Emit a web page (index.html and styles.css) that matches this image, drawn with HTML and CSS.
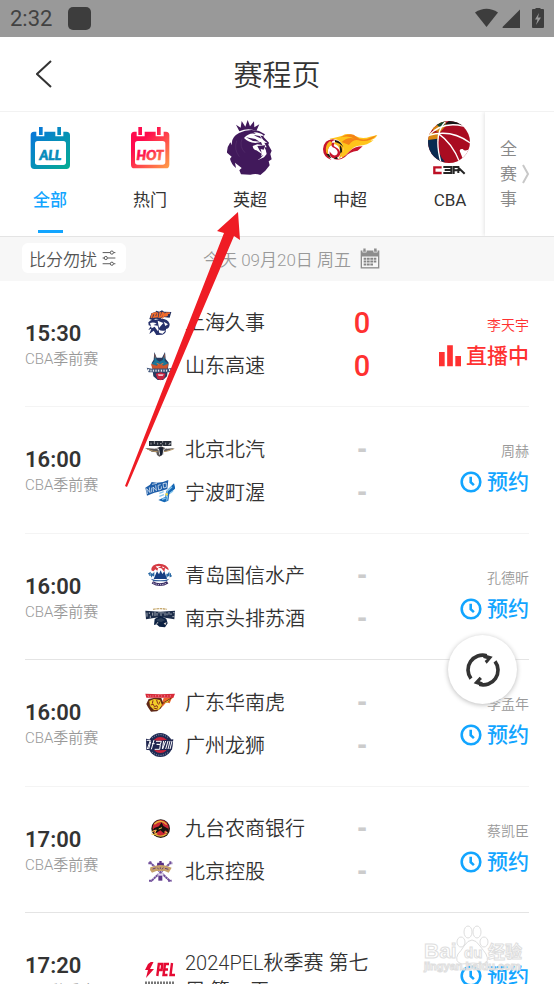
FILE: index.html
```html
<!DOCTYPE html>
<html lang="zh-CN">
<head>
<meta charset="utf-8">
<meta name="viewport" content="width=device-width, initial-scale=1">
<title>赛程页</title>
<link rel="stylesheet" href="styles.css">
</head>
<body>
<svg class="defs" aria-hidden="true">
  <symbol id="clock" viewBox="0 0 22 22"><circle cx="11" cy="11" r="9.3" fill="none" stroke="currentColor" stroke-width="2.6"/><path d="M10.7 5.8v5.4l3.2 2.9" fill="none" stroke="currentColor" stroke-width="2.6"/></symbol>
</svg>

<div class="status">
  <span>2:32</span><i class="status-app"></i>
  <svg class="status-icons" viewBox="0 0 72 24" aria-hidden="true">
    <path d="M1 5.5Q12.500-2 24 5.500L12.500 20Z" fill="#3d3d3d"/>
    <path d="M46 2.500V21H29Q28 20.500 29 19.500Z" fill="#3d3d3d"/>
    <path d="M59 2h2.500V1h5v1H69q1 0 1 1v17q0 1-1 1H59q-1 0-1-1V3q0-1 1-1Z" fill="#3d3d3d"/>
    <path d="M65 6l-4 6.500h2.500L62 18l5-7.500h-3Z" fill="#999"/>
  </svg>
</div>

<header class="header">
  <button class="back" aria-label="返回"><svg viewBox="0 0 16 28"><path d="M15 1L1 14l14 13" fill="none" stroke="#333" stroke-width="2"/></svg></button>
  <h1>赛程页</h1>
</header>

<nav class="leagues">
  <div class="tabs">
    <a class="tab active" href="#all">
      <svg viewBox="60 24 180 180" aria-hidden="true">
        <defs><linearGradient id="ga" x1="0" y1="0" x2="1" y2="1"><stop offset=".1" stop-color="#0878d8"/><stop offset="1" stop-color="#04ad91"/></linearGradient></defs>
        <path transform="translate(-1 0)" fill="url(#ga)" d="M103 65h7v14h24V65h33v14h24V65h9q11 0 11 11v90q0 11-11 11h-96q-11 0-11-11V76q0-11 10-11ZM118 51h11v24h-11ZM173 51h11v24h-11Z"/>
        <rect x="105" y="93" width="93" height="72" rx="8" fill="#fff"/>
        <text x="151" y="149" text-anchor="middle" class="badge" fill="#078cba" stroke="#078cba">ALL</text>
      </svg><span>全部</span></a>
    <a class="tab" href="#hot">
      <svg viewBox="360 24 180 180" aria-hidden="true">
        <defs><linearGradient id="gh" x1="0" y1="0" x2="1" y2="1"><stop offset=".3" stop-color="#ff0b4e"/><stop offset="1" stop-color="#ffa047"/></linearGradient></defs>
        <path fill="url(#gh)" d="M403 65h7v14h24V65h33v14h24V65h7q10 0 10 11v88q0 11-10 11h-95q-10 0-10-11V76q0-11 10-11ZM415 51h11v24h-11ZM471 51h11v24h-11Z"/>
        <rect x="405" y="93" width="91" height="71" rx="8" fill="#fff"/>
        <text x="450" y="149" text-anchor="middle" class="badge" fill="url(#gh)" stroke="url(#gh)">HOT</text>
      </svg><span>热门</span></a>
    <a class="tab" href="#epl">
      <svg viewBox="60 24 180 180" aria-hidden="true">
        <g fill="#41195b">
          <path d="M118 64L108 44l14 9 3-20 11 17 7-20 7 19 12-15 1 18 15-9-9 20Q145 52 118 64Z"/>
          <path d="M117 69Q145 55 177 63L195 73 190 80 207 98 205 104 215 122 211 132 215 148 206 154 209 166 196 182 181 195Q168 189 151 194L123 193 118 181 125 174 105 158 108 174Q94 163 90 146L95 140 81 128Q80 112 91 97L96 106Q92 82 117 69Z"/>
        </g>
        <path d="M132 84Q148 66 168 72L160 67Q182 67 192 78L181 77 190 90 202 99 193 98 200 112 193 112Q199 120 200 132L192 142 174 150Q185 139 185 131L169 121Q160 120 158 108L172 103 187 105 183 96 166 99Q145 98 132 84Z" fill="#fff"/>
        <path d="M138 82l28 5 13 8-20-2ZM161 75l18 3 6 8-14-6ZM172 108l24-2-5 13-9-2 3 12-7-9ZM163 127q10 12 20 12l8-5-12 13Z" fill="#41195b"/>
        <path d="M126 86q-9 25 9 42M110 92q-9 27 8 48" fill="none" stroke="#54306b" stroke-width="2"/>
      </svg><span>英超</span></a>
    <a class="tab" href="#csl">
      <svg viewBox="360 24 180 180" aria-hidden="true">
        <path d="M389 86Q420 82 435 73 450 70 466 78 487 89 510 80L532 75Q525 88 511 91 518 92 521 90 503 107 476 107 459 110 447 126L428 145Z" fill="#ffc51b"/>
        <path d="M422 82q32-17 47-2 17 16 42 3l19-7q-22 22-49 16-20-8-34 13l-22-9q20-18 40-9-17-12-43-5Z" fill="#f58416"/>
        <path d="M398 149Q427 151 449 124 463 109 488 109L473 122Q449 124 435 141 420 153 398 149Z" fill="#c7152c"/>
        <circle cx="400" cy="118" r="31" fill="#fff"/>
        <path d="M399 88Q372 89 369 117q0 24 25 33-13-14-10-31 2-13 13-15l-2-8Q398 90 408 91Z" fill="#c7152c"/>
        <path d="M390 93q-16 11-12 32 4 14 13 20-11-16-6-30 4-9 12-10l-2-8Z" fill="#fbb91c"/>
        <path d="M399 97q-9 7-1 15 16 6 15 17-3 10-14 6-7-4-10-11-2 15 9 20 18 3 23-12 0-13-14-20-10-5-3-11Z" fill="#c7152c"/>
        <path d="M411 92q22 8 20 29-2 18-16 27 9-15 4-29-2-13-17-18 1-7 9-9Z" fill="#fbb91c"/>
        <path d="M405 90q18 2 25 22-10-13-25-16ZM378 131q6 10 16 14l-7-13ZM400 147l10-7 4 7ZM419 105q8 7 7 20l-5 6Z" fill="#1d1712"/>
      </svg><span>中超</span></a>
    <a class="tab" href="#cba">
      <svg viewBox="108 24 180 180" aria-hidden="true">
        <defs><clipPath id="ball"><circle cx="195" cy="96" r="63"/></clipPath></defs>
        <g clip-path="url(#ball)">
          <path d="M130 30h130v130H130Z" fill="#a90c21"/>
          <path d="M130 68l32 0v25l-32 4Z" fill="#d88714"/><path d="M130 90l30-4q-3 41 23 70l-50-8Z" fill="#092b51"/>
          <path d="M142 57l40-27 5 16-20 22Z" fill="#d88714"/><path d="M157 43l29-14-5 18-14 5Z" fill="#13442c"/><path d="M181 48q9-18 27-18 20 2 28 18-28-10-55 0Z" fill="#161616"/>
          <g fill="none" stroke="#fff" stroke-width="4"><path d="M134 77q39-44 104-29"/><path d="M129 78q70-24 130 21"/><path d="M184 35q-37 36-13 124"/><path d="M162 70q45 30 68 94"/></g>
          <path d="M264 108q-18 22-28 9-14-2-6 13l7 18 31-13Z" fill="#fff"/>
        </g>
        <path d="M173 172h-22v17h22" fill="none" stroke="#bd1024" stroke-width="7"/>
        <path d="M178 171h24v18h-24M182 180h20M209 192v-21h14v18M210 181h14M220 170l22 21" fill="none" stroke="#252525" stroke-width="6"/>
      </svg><span>CBA</span></a>
  </div>
  <button class="all-events"><span>全赛事</span><svg viewBox="0 0 8 20" aria-hidden="true"><path d="M1 1l5 9-5 9" fill="none" stroke="#c8c8c8" stroke-width="2"/></svg></button>
</nav>

<div class="datebar">
  <button class="quiet">比分勿扰<svg viewBox="0 0 44 48" aria-hidden="true"><g fill="none" stroke="#555" stroke-width="3"><path d="M2 7h24M37 7h5M2 24h5M18 24h24M2 42h24M37 42h5"/><circle cx="31" cy="7" r="5"/><circle cx="12" cy="24" r="5"/><circle cx="31" cy="42" r="5"/></g></svg></button>
  <button class="date"><span>今天 09月20日 周五</span><svg viewBox="0 0 60 62" aria-hidden="true"><path d="M2 7h8V1h7v6h25V1h8v6h8v54H2Z" fill="#8d8d8d"/><path d="M6 25h48v32H6Z" fill="#f7f7f7"/><path d="M8 3v9h11V3M41 3v9h11V3" fill="none" stroke="#f7f7f7" stroke-width="2"/><path d="M11 29h8v6h-8ZM21 29h8v6h-8ZM31 29h8v6h-8ZM41 29h8v6h-8ZM11 37h8v6h-8ZM21 37h8v6h-8ZM31 37h8v6h-8ZM41 37h8v6h-8ZM11 46h8v6h-8ZM21 46h8v6h-8ZM31 46h8v6h-8Z" fill="#858585"/></svg></button>
</div>

<main>
<ul class="matches">
  <li class="match">
    <div class="when"><time>15:30</time><span>CBA季前赛</span></div>
    <div class="teams">
      <div class="team"><svg viewBox="435 51 90 90" aria-hidden="true"><path d="M448 84l6-17 12-4 3-4 9 3 8-4 6 4 22 1-5 17-20-2-8 7-14-2-8 5Z" fill="#223061"/><path d="M454 81l3-12 10-3-5 12 7-1M473 64l-2 15M481 63l-3 15 6-1 4-14M492 64l-2 13 10-12-3 12M510 66l-8 1-1 8" fill="none" stroke="#f16c2c" stroke-width="5"/><path d="M445 94q9-11 22-8l14-3q24 0 28 16 0 14-11 15 2 12-11 17l-18 1-8-13-13 10 6-16-9 4 8-12-7-2Z" fill="#25306b"/><path d="M450 96q11-4 20 2l-10 4 13 2q4 9 0 16l-9-13-9 5ZM473 89l17 7-13 15ZM491 92l13 8-8 5ZM475 115q12 8 23 2l-10 11-10-2Z" fill="#fff"/></svg><span class="name">上海久事</span><b class="score">0</b></div>
      <div class="team"><svg viewBox="435 180 90 90" aria-hidden="true"><path d="M463 183l7 17h16l9-17 2 21 9 11-5 41-12 11h-16l-13-11-5-40 6-10Z" fill="#263a60"/><path d="M465 191l5 16 9 5 9-5 6-17v20l10 7-8 9-17-4-18 4-6-8 8-7Z" fill="#1b7698"/><path d="M454 220l15 5 10-6 12 6 13-6-3 13H458ZM464 190l2 12M494 190l-2 12" fill="#ce562d" stroke="#ce562d" stroke-width="2"/><path d="M440 230l17 3h44l17-3-6 14H446Z" fill="#43587c"/><path d="M446 234v6M453 236v6M460 236v6M468 236v6M476 236v6M484 236v6M492 236v6M500 236v6M509 234v6" fill="none" stroke="#fff" stroke-width="3"/><path d="M467 248l15-4 15 4-5 15-10 5-10-5Z" fill="#c52441"/><path d="M473 250h18l-3 5h-12Z" fill="#e9c6cc"/><path d="M470 217l7 3M490 217l-7 3" stroke="#f3712f" stroke-width="3"/></svg><span class="name">山东高速</span><b class="score">0</b></div>
    </div>
    <div class="action live"><span>李天宇</span><button><svg viewBox="0 0 62 60" aria-hidden="true"><path d="M0 19h16v40H0ZM23 0h16v59H23ZM46 30h16v29H46Z" fill="currentColor"/></svg>直播中</button></div>
  </li>
  <li class="match">
    <div class="when"><time>16:00</time><span>CBA季前赛</span></div>
    <div class="teams">
      <div class="team"><svg viewBox="435 432 90 90" aria-hidden="true"><path d="M447 450h67v15h-67Z" fill="#242a35"/><path d="M453 455v6M463 450v9M473 455v6M480 458h5M488 450v5M488 461v4M497 455v6M507 457h6M505 461h6" fill="none" stroke="#d9d9d9" stroke-width="2"/><path d="M435 471l30 2 18-7 18 7 25-2-27 10-10 3-3 9-8 4-7-5-2-8-14-2-8-5Z" fill="#5b5757"/><path d="M441 474l20 7 12 1M521 474l-18 6-13 2" fill="none" stroke="#b39465" stroke-width="3"/><path d="M469 472l8 4 2 15M498 472l-7 4-1 15" fill="none" stroke="#ddd" stroke-width="3"/><path d="M477 469h12l-2 22-6 3Z" fill="#171f30"/></svg><span class="name">北京北汽</span><b class="score none">-</b></div>
      <div class="team"><svg viewBox="435 561 90 90" aria-hidden="true"><path d="M436 590l14-9 5-8 16 2 18-2 16-6-3 27-21 7-18 4-22 9Z" fill="#1e5ea9"/><path d="M442 609l-2-16 10 12-2-16M455 590v14M461 603l-2-15 10 11-2-16M482 581l-8 2 2 14 8-3v-8M489 578l2 13 8-2V576ZM456 580l15-3" fill="none" stroke="#fff" stroke-width="2"/><path d="M522 577l4 15-18 17-3 20-12 5-18-7 20-9 4-18Z" fill="#1668b5"/><path d="M516 587l-14 13-4 18M491 602l-13 5M492 611l-14 5M519 600l-9 7M486 625l11-4M503 613l-3 16" stroke="#86c6ec" stroke-width="4" fill="none"/><circle cx="500" cy="610" r="4" fill="#f1d84e"/></svg><span class="name">宁波町渥</span><b class="score none">-</b></div>
    </div>
    <div class="action"><span>周赫</span><button><svg><use href="#clock"/></svg>预约</button></div>
  </li>
  <li class="match">
    <div class="when"><time>16:00</time><span>CBA季前赛</span></div>
    <div class="teams">
      <div class="team"><svg viewBox="45 30 90 90" aria-hidden="true"><path d="M64 58q-1-18 22-20 27 0 30 20l-11-7-2 12-9-11-9-2-3 9-6-4-6 6Z" fill="#d53a43"/><path d="M77 46l17-1-12 7ZM97 46l7 4-6 2Z" fill="#fff"/><path d="M71 84l10-23 6 9 5-12 5 11 6-8 8 23Z" fill="#173f82"/><path d="M55 69l5-3v9M65 67v8l6-7v8M111 68v8l5-8v8M121 67v9l4-2" fill="none" stroke="#2868a4" stroke-width="4"/><path d="M62 83q29 9 56 0l-8 8H71Z" fill="#315d9b"/><path d="M67 94q23 14 46 0" fill="none" stroke="#3b2c65" stroke-width="8"/><path d="M70 96q21 10 40 0" fill="none" stroke="#fff" stroke-width="3" stroke-dasharray="3 4"/></svg><span class="name">青岛国信水产</span><b class="score none">-</b></div>
      <div class="team"><svg viewBox="45 162 90 90" aria-hidden="true"><path d="M69 178q22-4 42 0" fill="none" stroke="#c7aa70" stroke-width="4" stroke-dasharray="8 2"/><path d="M46 182l45 3 44-3-2 26-42-7-43 7Z" fill="#1c2c49"/><path d="M51 188v12M58 187v5M61 197v7M68 188v9M75 185v13M81 189v8M87 186v4M93 186v13M99 186v5M105 187v10M111 190v6M117 186v8M123 190v5M127 200h6M129 188h5" fill="none" stroke="#e3e5e8" stroke-width="2"/><path d="M74 207l17-10 18 9 4 14-8 12-17-2-8-7-8 2Z" fill="#0c2142"/><path d="M78 209l15-5 13 6-12 6-12-2Z" fill="#2d405a"/><path d="M101 220l9-3-4 9ZM84 216l-7 5 8-1Z" fill="#d8d3d0"/></svg><span class="name">南京头排苏酒</span><b class="score none">-</b></div>
    </div>
    <div class="action"><span>孔德昕</span><button><svg><use href="#clock"/></svg>预约</button></div>
  </li>
  <li class="match">
    <div class="when"><time>16:00</time><span>CBA季前赛</span></div>
    <div class="teams">
      <div class="team"><svg viewBox="45 21 90 90" aria-hidden="true"><path d="M101 51l31-4-8 8-5 12-10-3-9 10-11 10Z" fill="#ec672c"/><path d="M56 54l18-4 20 1 5 14 28-17-11 14-18 6-5 14-12 9-18 1-9-13-5-10Z" fill="#602817"/><path d="M58 60l14-6 18 3 6 15-10 14-14 1-12-12ZM100 67l22-13-9 10-9 2Z" fill="#f3cf29"/><path d="M69 58l-2 10M80 57l3 11M62 72l8-2 3 7 8-3 2 6M71 81l12 3M89 62l-3 9" fill="none" stroke="#8a2b1c" stroke-width="3"/><path d="M46 38l44 2 45-2-5 12H49Z" fill="#d82939"/><path d="M53 42l4 6M62 43v4M69 43v4M77 42v5M86 42v5M95 43v4M104 42v5M113 43v4M121 42v5" fill="none" stroke="#fff" stroke-opacity=".6" stroke-width="2"/></svg><span class="name">广东华南虎</span><b class="score none">-</b></div>
      <div class="team"><svg viewBox="45 150 90 90" aria-hidden="true"><circle cx="91" cy="192" r="36" fill="#202c55"/><circle cx="91" cy="192" r="24" fill="#c8233b"/><path d="M48 173l37 6 45-4-4 31-36 2-41-1Z" fill="#20264f"/><path d="M50 178h11l-9 26M62 182l-6 22M72 177l-8 28M66 188h8M78 181h16l-3 9H80l11 1-2 14H74M101 180l-4 24M107 180l-9 24M114 180l-7 24M120 180l-6 24M126 180l-6 24" fill="none" stroke="#fff" stroke-width="3"/><path d="M66 171q25-20 50 0M66 213q24 20 50 0" fill="none" stroke="#9ca4ba" stroke-width="3" stroke-dasharray="3 4"/></svg><span class="name">广州龙狮</span><b class="score none">-</b></div>
    </div>
    <div class="action"><span>李孟年</span><button><svg><use href="#clock"/></svg>预约</button></div>
  </li>
  <li class="match">
    <div class="when"><time>17:00</time><span>CBA季前赛</span></div>
    <div class="teams">
      <div class="team"><svg viewBox="45 24 90 90" aria-hidden="true"><circle cx="92" cy="68" r="28" fill="#261b16"/><circle cx="92" cy="66" r="24" fill="#cb2634"/><path d="M73 55q19-19 37 1M73 83q18 15 37 0" fill="none" stroke="#e4b43a" stroke-width="4"/><path d="M73 66l14-5 8-12 5 11 15 8v12l-8-7-6 9-10-9-16 10 3-12-11 3Z" fill="#16120f"/><path d="M65 77l14-5-5 9 8 3M64 84l10 2M86 69l10-4M104 77l9 4" fill="none" stroke="#ecc54d" stroke-width="3"/></svg><span class="name">九台农商银行</span><b class="score none">-</b></div>
      <div class="team"><svg viewBox="45 153 90 90" aria-hidden="true"><path d="M60 169l61 57M123 169l-60 57M55 172h8M61 166v7M118 172h9M121 166v7M57 224h9M114 224h11" stroke="#71509b" stroke-width="6" stroke-dasharray="7 1"/><path d="M82 170h6v-5h7v5h6l3 20H79Z" fill="#583184"/><path d="M61 184l17-5q15-5 32 1l15 5-9 15-12-5H79l-13 5-6-8Z" fill="#c6a16a"/><path d="M68 189l9-3M82 185l4 5M91 184v5M100 185l-4 5M105 187l10 3" stroke="#674178" stroke-width="3"/><path d="M83 200l8 4 10-4-3 10H86Z" fill="#e4d9ed"/><path d="M85 209h12v15H85Z" fill="#5c3689"/></svg><span class="name">北京控股</span><b class="score none">-</b></div>
    </div>
    <div class="action"><span>蔡凯臣</span><button><svg><use href="#clock"/></svg>预约</button></div>
  </li>
  <li class="match">
    <div class="when"><time>17:20</time><span>PEL秋季赛</span></div>
    <div class="teams">
      <div class="team"><svg viewBox="0 6 30 30" aria-hidden="true"><path d="M10 3L3 8 0 14h3L1 22l8-9H5Z" fill="#e50a33"/><path d="M12.300 20l1.500-12h3.500l-.7 6h-3M24 8h-4l-1.500 11h4M19 13.500h4M27 7l-1.500 12H30" fill="none" stroke="#e50a33" stroke-width="2.400"/><path d="M0 27h29" stroke="#777" stroke-width="3" stroke-dasharray="2 1"/></svg><span class="name">2024PEL秋季赛 第七周 第一天</span></div>
    </div>
    <div class="action"><button><svg><use href="#clock"/></svg>预约</button></div>
  </li>
</ul>
</main>

<button class="refresh" aria-label="刷新"><svg viewBox="193 94 108 108"><g fill="none" stroke="#333" stroke-width="11"><path d="M211 174A44 44 0 0 1 258 105"/><path d="M283 122A44 44 0 0 1 236 191"/></g><path d="M248 100l28 8-18 21-6-8 7-6-11-3ZM246 197l-27-9 18-20 7 7-7 7 9 3Z" fill="#333"/></svg></button>

<svg class="pointer" viewBox="0 0 116 276" aria-hidden="true"><path d="M113 0l2 28-6-4L2 275 0 274 99 21l-7-2Z" fill="#ef1c24"/></svg>

<svg class="watermark" viewBox="0 0 104 50" aria-hidden="true">
  <g fill="#fff" fill-opacity=".8" stroke="#dedede" stroke-width="1">
    <text x="2" y="34" class="wm-big">Bai</text>
    <path d="M36 30q3-3 6-8 8-12 16 0 4 5 6 8 4 8-3 10-9-2-21 0-8-2-4-10Z"/>
    <ellipse cx="39" cy="18" rx="4" ry="5"/><ellipse cx="46" cy="8" rx="4" ry="6"/><ellipse cx="55" cy="8" rx="4" ry="6"/><ellipse cx="62" cy="18" rx="4" ry="5"/>
    <text x="42" y="34" class="wm-du">du</text>
    <text x="66" y="34" class="wm-cn">经验</text>
    <text x="2" y="46" class="wm-url">jingyan.baidu.com</text>
  </g>
</svg>
</body>
</html>
```
FILE: styles.css
```css
* { box-sizing: border-box; }

body {
  margin: 0;
  height: 100vh;
  overflow: hidden;
  position: relative;
  background: #fff;
  color: #333;
  font-family: Roboto, "Noto Sans CJK SC", sans-serif;
  font-size: 17px;
}

button {
  border: 0;
  padding: 0;
  background: none;
  color: inherit;
  font: inherit;
}

a { color: inherit; text-decoration: none; }
svg { display: block; flex: none; }
.defs { position: absolute; width: 0; height: 0; }

.status {
  display: flex;
  align-items: center;
  gap: 16px;
  height: 37px;
  padding: 0 8px 0 10px;
  background: #999;
  color: #424242;
  font-size: 22px;
}
.status-app { width: 23px; height: 23px; border-radius: 5px; background: #3d3d3d; }
.status-icons { width: 72px; height: 24px; margin-left: auto; }

.header {
  display: grid;
  grid-template-columns: 52px 1fr 52px;
  align-items: center;
  height: 75px;
  border-bottom: 1px solid #f2f2f2;
}
.back { justify-self: end; }
.back svg { width: 16px; height: 28px; }
.header h1 {
  margin: 0;
  padding-top: 3px;
  text-align: center;
  font-size: 29px;
  font-weight: 350;
  line-height: 40px;
}

.leagues { display: flex; height: 125px; border-bottom: 1px solid #e4e4e4; }
.tabs { display: flex; flex: 1; min-width: 0; overflow: hidden; }
.tab {
  display: flex;
  flex: 0 0 100px;
  flex-direction: column;
  align-items: center;
  padding-top: 6px;
}
.tab svg { width: 60px; height: 60px; }
.tab span { margin-top: 9px; line-height: 26px; }
.active { color: #12a5ff; font-weight: 500; }
.active::after { content: ""; width: 25px; height: 3px; margin-top: 17px; background: #12a5ff; }
.badge { font: italic 900 40px Lato, sans-serif; stroke-width: 2; }
.all-events {
  display: flex;
  flex: 0 0 69px;
  align-items: center;
  gap: 5px;
  padding-left: 15px;
  background: #fff;
  box-shadow: -1px 0 4px #e4e4e4;
  clip-path: inset(0 0 0 -6px);
  color: #888;
  font-weight: 350;
}
.all-events span { width: 17px; line-height: 25px; }
.all-events svg { width: 8px; height: 20px; }

.datebar {
  display: flex;
  align-items: center;
  gap: 77px;
  height: 44px;
  padding: 0 22px 2px;
  background: #f7f7f7;
}
.quiet {
  display: flex;
  align-items: center;
  gap: 5px;
  height: 30px;
  padding: 0 10px 0 7px;
  border-radius: 6px;
  background: #fff;
  color: #555;
  font-weight: 350;
}
.quiet svg { width: 14px; height: 16px; }
.date { display: flex; align-items: center; gap: 9px; color: #999; font-weight: 350; }
.date svg { width: 20px; height: 21px; }

.matches { margin: 0; padding: 0; list-style: none; }
.match {
  display: grid;
  grid-template-columns: 120px 1fr 118px;
  align-items: center;
  height: 126px;
  margin: 0 25px;
  padding-top: 2px;
  border-bottom: 1px solid #e4e4e4;
}
.match:nth-child(even) { height: 127px; }
.match:first-child, .match:nth-child(even) { border-color: #f4f4f4; }

.when { display: flex; flex-direction: column; padding-top: 2px; }
.when time { font-size: 22px; font-weight: 600; line-height: 26px; }
.when span { color: #999; font-size: 15px; font-weight: 350; line-height: 24px; }

.team {
  display: grid;
  grid-template-columns: 30px 1fr auto;
  align-items: center;
  column-gap: 10px;
  min-height: 43px;
}
.team:only-child { padding-right: 26px; }
.team svg { width: 30px; height: 30px; }
.name { font-size: 20px; font-weight: 350; line-height: 28px; }
.score {
  width: 20px;
  margin-right: 39px;
  color: #ff3131;
  font: 500 29px/30px Roboto, sans-serif;
  text-align: center;
}
.none {
  padding-bottom: 4px;
  color: #ccc;
  font-family: "Liberation Sans", sans-serif;
  font-weight: 700;
}

.action { display: flex; flex-direction: column; align-items: flex-end; padding-bottom: 2px; }
.action span { color: #999; font-size: 14px; font-weight: 350; line-height: 24px; }
.action button {
  display: flex;
  align-items: center;
  gap: 5px;
  color: #12a5ff;
  font-size: 21px;
  font-weight: 500;
  line-height: 38px;
}
.action svg { width: 22px; height: 22px; }
.action.live span, .action.live button { color: #ff3131; }

.refresh {
  position: fixed;
  top: 635px;
  right: 37px;
  display: grid;
  place-items: center;
  width: 69px;
  height: 69px;
  border-radius: 50%;
  background: #fff;
  box-shadow: 0 1px 5px #bbb;
}
.refresh svg { width: 36px; height: 36px; }

.pointer { position: absolute; top: 212px; left: 125px; width: 116px; height: 276px; }

.watermark { position: absolute; right: 28px; top: 924px; width: 104px; height: 50px; }
.wm-big { font: 700 21px "Liberation Sans", sans-serif; }
.wm-du { font: 700 15px "Liberation Sans", sans-serif; }
.wm-cn { font: 700 17px "Noto Sans CJK SC", sans-serif; }
.wm-url { font: 700 11px "Liberation Sans", sans-serif; }
```
